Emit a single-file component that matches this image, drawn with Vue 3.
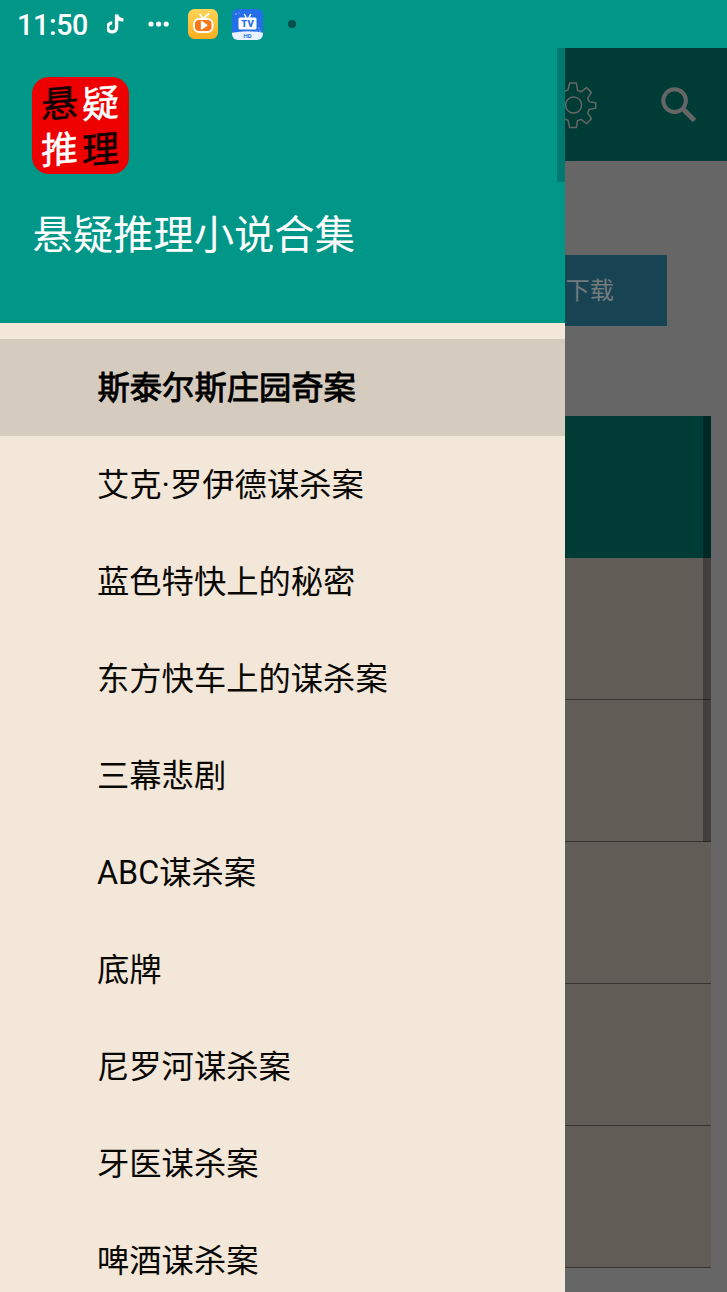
<script setup>
const chapters = [
  '斯泰尔斯庄园奇案', '艾克·罗伊德谋杀案', '蓝色特快上的秘密', '东方快车上的谋杀案', '三幕悲剧',
  'ABC谋杀案', '底牌', '尼罗河谋杀案', '牙医谋杀案', '啤酒谋杀案',
]
const logo = [
  { text: '悬', dark: true }, { text: '疑', dark: false },
  { text: '推', dark: false }, { text: '理', dark: true },
]
</script>

<template>
  <div class="screen">
    <header class="status">
      <span class="time">11:50</span>
      <svg class="note" width="18" height="22" viewBox="0 0 18 22">
        <path d="M9.6 1.5v13a4.5 4.5 0 1 1-4.4-4.6M9.6 1.5c.4 3.3 2.9 5.3 6.8 5.4" fill="none" stroke="#fff" stroke-width="3.4" />
      </svg>
      <svg class="dots" width="22" height="6" viewBox="0 0 22 6" fill="#fff">
        <circle cx="3" cy="3" r="2.6" /><circle cx="10.6" cy="3" r="2.6" /><circle cx="18.2" cy="3" r="2.6" />
      </svg>
      <svg class="video" width="30" height="30" viewBox="0 0 30 30">
        <defs>
          <linearGradient id="gold" x1="0" y1="0" x2="0" y2="1">
            <stop offset="0" stop-color="#ffd557" /><stop offset="1" stop-color="#ffad1d" />
          </linearGradient>
        </defs>
        <rect width="30" height="30" rx="6.5" fill="url(#gold)" />
        <path d="M12 5.5l3.2 4 5.5-4.6" fill="none" stroke="#fff" stroke-width="1.8" stroke-linecap="round" />
        <rect x="6" y="10" width="18.5" height="13" rx="5" fill="#f87518" stroke="#fff" stroke-width="1.9" />
        <path d="M12.8 12.5q0-1 1-.5l5.3 3.6q1 .8 0 1.5l-5.3 3.4q-1 .6-1-.6z" fill="#fff" />
      </svg>
      <svg class="tv" width="31" height="31" viewBox="0 0 31 31">
        <defs><clipPath id="tvclip"><rect width="31" height="31" rx="6" /></clipPath></defs>
        <g clip-path="url(#tvclip)">
          <rect width="31" height="31" fill="#246fe8" />
          <path d="M0 23.8q15.5-3 31 0V31H0z" fill="#e9f2ff" />
          <path d="M12.3 5l2 4M18.8 5l-2 4" stroke="#fff" stroke-width="1.5" />
          <rect x="6.5" y="8.5" width="18" height="12" rx="1.5" fill="#fff" />
          <g fill="#a9caff"><circle cx="4" cy="5" r=".8" /><circle cx="7" cy="4" r=".6" /><circle cx="27" cy="19" r=".7" /><circle cx="28" cy="22" r=".8" /><circle cx="25" cy="22" r=".6" /></g>
          <text x="15.5" y="18" text-anchor="middle" font-size="9.5" font-weight="900" fill="#246fe8">TV</text>
          <text x="15.5" y="28.9" text-anchor="middle" font-size="6" font-weight="700" fill="#246fe8">HD</text>
        </g>
      </svg>
      <i class="pip"></i>
    </header>

    <div class="body">
      <aside class="drawer">
        <div class="hero">
          <div class="logo">
            <span v-for="c in logo" :key="c.text" :class="{ dark: c.dark }">{{ c.text }}</span>
          </div>
          <h1>悬疑推理小说合集</h1>
          <i class="drawer-scroll"></i>
        </div>
        <nav>
          <div v-for="(c, i) in chapters" :key="c" class="item" :class="{ active: i === 0 }">{{ c }}</div>
        </nav>
      </aside>

      <main class="page">
        <div class="appbar">
          <svg class="gear" width="34" height="48" viewBox="0 0 34 48" fill="none" stroke="#666" stroke-width="1.5">
            <path d="M-1 10.5l4-1.5 1.7-7h6.6l1.2 7.2 3.5 1.6 5.6-4.2 4.8 4.8-3.7 5.8 1.5 3.5 6.5 1.1v5.4l-6.5 1.2-1.5 3.6 3.7 5.7-4.8 4.8-5.6-4.2-3.5 1.5-1.2 6.7H4.7L3 39.3l-4-1.5" />
            <circle cx="8.6" cy="24" r="8" />
          </svg>
          <svg class="search" width="37" height="37" viewBox="0 0 37 37" fill="none" stroke="#666">
            <circle cx="13.6" cy="13.6" r="11.3" stroke-width="4" />
            <path d="M21.5 21.5L33.5 33.5" stroke-width="5" />
          </svg>
        </div>
        <div class="download">下载</div>
        <div class="table">
          <div class="thead"></div>
          <div v-for="n in 5" :key="n" class="row"></div>
          <i class="table-scroll"></i>
        </div>
      </main>
    </div>
  </div>
</template>

<style scoped>
.screen {
  width: 727px;
  height: 1292px;
  overflow: hidden;
  display: flex;
  flex-direction: column;
  background: #666;
  font-family: Roboto, "Noto Sans CJK SC", sans-serif;
}
.status {
  flex: 0 0 48px;
  height: 48px;
  display: flex;
  align-items: center;
  background: #009788;
  color: #fff;
}
.time {
  width: 72px;
  height: 48px;
  margin-left: 17px;
  font-size: 28.6px;
  line-height: 51px;
  font-weight: 500;
  letter-spacing: -0.3px;
}
.note { margin-left: 17.5px; }
.dots { margin-left: 23.5px; }
.video { margin-left: 18px; }
.tv { margin-left: 14px; }
.pip {
  width: 8px;
  height: 8px;
  margin-left: 25px;
  border-radius: 50%;
  background: #0a4f4c;
}
.body {
  flex: 1;
  min-height: 0;
  display: flex;
}
.drawer {
  flex: 0 0 565px;
  background: #f2e7d9;
  overflow: hidden;
}
.hero {
  position: relative;
  height: 275px;
  box-sizing: border-box;
  padding: 29px 0 0 32px;
  background: #009788;
}
.logo {
  width: 97px;
  height: 97px;
  box-sizing: border-box;
  padding: 5px 8px 4px 7px;
  display: grid;
  grid-template-columns: 1fr 1fr;
  grid-template-rows: 1fr 1fr;
  place-items: center;
  border-radius: 17px;
  background: #ee0000;
  color: #fff;
  font-size: 37px;
  line-height: 46px;
  font-weight: 400;
  -webkit-text-stroke: 0.5px currentColor;
}
.logo span { transform: skewY(-5deg); }
.logo .dark { color: #100000; }
h1 {
  margin: 32px 0 0 0.6px;
  font-size: 40.3px;
  line-height: 60px;
  font-weight: 400;
  color: #fff;
}
.drawer-scroll {
  position: absolute;
  right: 0;
  top: 0;
  width: 8px;
  height: 134px;
  background: #007a70;
}
nav { padding-top: 16px; }
.item {
  height: 97px;
  padding-left: 97px;
  font-size: 32.3px;
  line-height: 99px;
  color: #0a0805;
  white-space: nowrap;
}
.active {
  padding-left: 97.5px;
  background: #d5cbbf;
  color: #000;
  -webkit-text-stroke: 0.9px #000;
}
.page { flex: 1; }
.appbar {
  height: 113px;
  display: flex;
  align-items: flex-start;
  background: #003c36;
}
.gear { margin-top: 33px; }
.search { margin: 39px 0 0 61.5px; }
.download {
  width: 102px;
  height: 71px;
  margin-top: 94px;
  box-sizing: border-box;
  padding-left: 0.6px;
  background: #184353;
  color: #747b7e;
  font-size: 24.2px;
  line-height: 72px;
}
.table {
  position: relative;
  width: 146px;
  margin-top: 90px;
}
.thead {
  height: 142px;
  background: #003c36;
}
.row {
  height: 142px;
  box-sizing: border-box;
  border-bottom: 1px solid #38332f;
  background: #615c55;
}
.table-scroll {
  position: absolute;
  top: 0;
  right: 0;
  width: 8px;
  height: 426px;
  background: rgba(0, 0, 0, 0.3);
}
</style>
